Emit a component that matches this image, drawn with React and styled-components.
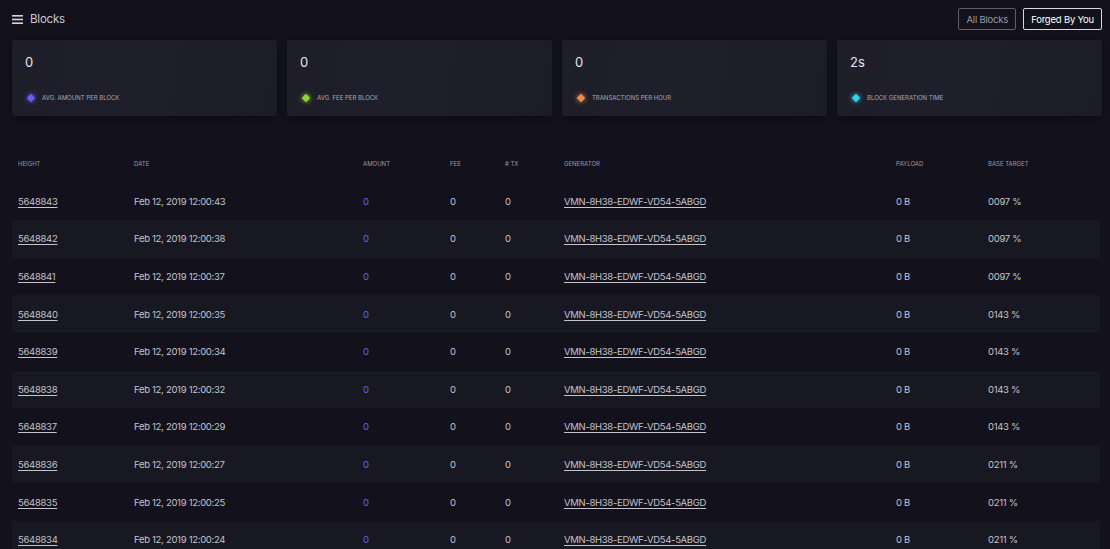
import React from "react";
import styled, { createGlobalStyle } from "styled-components";

const GlobalStyle = createGlobalStyle`
  html, body {
    margin: 0;
    padding: 0;
    background: #13121c;
    font-family: Inter, "Open Sans", sans-serif;
    color: #d6d6dc;
  }
`;

const Page = styled.div`
  padding: 0 8px 0 12px;
  min-height: 549px;
  overflow: hidden;
`;

const TopBar = styled.div`
  display: flex;
  align-items: center;
  justify-content: space-between;
  height: 38px;
`;

const Title = styled.div`
  display: flex;
  align-items: center;
  gap: 7px;
  font-size: 11.5px;
  letter-spacing: -0.2px;
  color: #c9c9d1;
`;

const Buttons = styled.div`
  display: flex;
  gap: 7px;
`;

const Button = styled.button`
  font-family: inherit;
  font-size: 9.5px;
  letter-spacing: -0.2px;
  height: 22px;
  padding: 0 7px;
  background: transparent;
  border-radius: 2px;
  border: 1px solid ${(p) => (p.active ? "#d8d8de" : "#5e5e68")};
  color: ${(p) => (p.active ? "#ffffff" : "#9a9aa4")};
`;

const Cards = styled.div`
  display: grid;
  grid-template-columns: repeat(4, 1fr);
  gap: 10px;
  margin-top: 2px;
`;

const Card = styled.div`
  height: 76px;
  box-sizing: border-box;
  padding: 14px 12px 0 13px;
  border-radius: 3px;
  background: linear-gradient(100deg, #1e1e29 0%, #1f1f2c 45%, #1b1d26 100%);
  box-shadow: 0 2px 6px rgba(0, 0, 0, 0.35);
`;

const Value = styled.div`
  font-size: 13px;
  color: #e6e6ea;
  height: 16px;
`;

const Label = styled.div`
  display: flex;
  align-items: center;
  gap: 8px;
  margin-top: 24px;
  font-size: 6px;
  text-transform: uppercase;
  color: #a9a9b3;
`;

const Diamond = styled.span`
  width: 6px;
  height: 6px;
  margin-left: 3px;
  transform: rotate(45deg);
  background: ${(p) => p.color};
  box-shadow: 0 0 5px ${(p) => p.color};
`;

const Table = styled.div`
  margin-top: 29px;
  margin-right: 2px;
`;

const Row = styled.div`
  display: grid;
  grid-template-columns: 116px 229px 87px 55px 59px 332px 92px 1fr;
  align-items: center;
  height: 37.6px;
  padding-left: 6px;
  font-size: 9.5px;
  letter-spacing: -0.3px;
  color: #c4c4cc;
  background: ${(p) => (p.odd ? "#181822" : "transparent")};
`;

const HeadRow = styled(Row)`
  font-size: 6px;
  letter-spacing: 0;
  text-transform: uppercase;
  color: #9a9aa4;
`;

const Link = styled.span`
  text-decoration: underline;
  text-underline-offset: 2px;
  color: #c4c4cc;
`;

const Amount = styled.span`
  color: #6862f2;
`;

const Menu = () => (
  <svg width="11" height="9" viewBox="0 0 11 9">
    <rect x="0" y="0" width="11" height="1.6" fill="#d6d6dc" />
    <rect x="0" y="3.7" width="11" height="1.6" fill="#d6d6dc" />
    <rect x="0" y="7.4" width="11" height="1.6" fill="#d6d6dc" />
  </svg>
);

const stats = [
  { value: "0", label: "Avg. amount per block", color: "#6a5cf5" },
  { value: "0", label: "Avg. fee per block", color: "#8ed630" },
  { value: "0", label: "Transactions per hour", color: "#f08a4a" },
  { value: "2s", label: "Block generation time", color: "#2fd4e6" },
];

const blocks = [
  ["5648843", "12:00:43", "0097 %"],
  ["5648842", "12:00:38", "0097 %"],
  ["5648841", "12:00:37", "0097 %"],
  ["5648840", "12:00:35", "0143 %"],
  ["5648839", "12:00:34", "0143 %"],
  ["5648838", "12:00:32", "0143 %"],
  ["5648837", "12:00:29", "0143 %"],
  ["5648836", "12:00:27", "0211 %"],
  ["5648835", "12:00:25", "0211 %"],
  ["5648834", "12:00:24", "0211 %"],
];

export default function App() {
  return (
    <Page>
      <GlobalStyle />
      <TopBar>
        <Title>
          <Menu />
          Blocks
        </Title>
        <Buttons>
          <Button>All Blocks</Button>
          <Button active>Forged By You</Button>
        </Buttons>
      </TopBar>
      <Cards>
        {stats.map((s) => (
          <Card key={s.label}>
            <Value>{s.value}</Value>
            <Label>
              <Diamond color={s.color} />
              {s.label}
            </Label>
          </Card>
        ))}
      </Cards>
      <Table>
        <HeadRow>
          <span>Height</span>
          <span>Date</span>
          <span>Amount</span>
          <span>Fee</span>
          <span># TX</span>
          <span>Generator</span>
          <span>Payload</span>
          <span>Base Target</span>
        </HeadRow>
        {blocks.map((b, i) => (
          <Row key={b[0]} odd={i % 2 === 1}>
            <Link>{b[0]}</Link>
            <span>Feb 12, 2019 {b[1]}</span>
            <Amount>0</Amount>
            <span>0</span>
            <span>0</span>
            <Link>VMN-8H38-EDWF-VD54-5ABGD</Link>
            <span>0 B</span>
            <span>{b[2]}</span>
          </Row>
        ))}
      </Table>
    </Page>
  );
}
